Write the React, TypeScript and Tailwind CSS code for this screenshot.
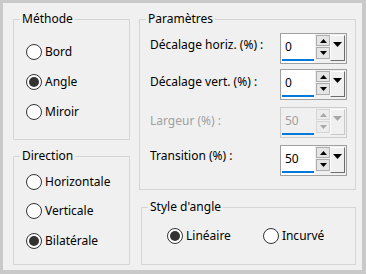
import React from "react";

function Radio({ label, checked }: { label: string; checked?: boolean }) {
  return (
    <div className="flex h-[16px] items-center gap-[3px]">
      <div className="flex h-[16px] w-[16px] items-center justify-center rounded-full border border-[#333333] bg-white">
        {checked && <div className="h-[10px] w-[10px] rounded-full bg-[#333333]" />}
      </div>
      <span className="leading-[16px] text-black">{label}</span>
    </div>
  );
}

function UpArrow({ color }: { color: string }) {
  return (
    <svg width="7" height="4" viewBox="0 0 7 4">
      <polygon points="0,4 7,4 3.5,0" fill={color} />
    </svg>
  );
}
function DownArrow({ color, w = 7, h = 4 }: { color: string; w?: number; h?: number }) {
  return (
    <svg width={w} height={h} viewBox={`0 0 ${w} ${h}`}>
      <polygon points={`0,0 ${w},0 ${w / 2},${h}`} fill={color} />
    </svg>
  );
}

function Spin({ value, disabled }: { value: string; disabled?: boolean }) {
  const arrow = disabled ? "#a8a8a8" : "#000000";
  return (
    <div
      className={`flex h-[31px] w-[67px] border bg-[#f0f0f0] ${
        disabled ? "border-[#cccccc]" : "border-[#a0a0a0]"
      }`}
    >
      <div className={`flex h-full w-[34px] flex-col pt-[5px] ${disabled ? "bg-[#f0f0f0]" : "bg-white"}`}>
        <span className={`h-[16px] pl-[4px] leading-[16px] ${disabled ? "text-[#a0a0a0]" : "text-black"}`}>
          {value}
        </span>
        <div className="ml-[1px] mt-[4px] h-[2px] w-[32px] bg-[#0078d7]" />
      </div>
      <div className="flex pl-[1px] pt-[1px]">
        <div className="flex w-[14px] flex-col">
          <div
            className={`flex h-[11px] w-[14px] items-center justify-center border ${
              disabled ? "border-[#d5d5d5] bg-[#ececec]" : "border-[#adadad] bg-[#e5e5e5]"
            }`}
          >
            <UpArrow color={arrow} />
          </div>
          <div
            className={`mt-[1px] flex h-[12px] w-[14px] items-center justify-center border ${
              disabled ? "border-[#d5d5d5] bg-[#ececec]" : "border-[#adadad] bg-[#e5e5e5]"
            }`}
          >
            <DownArrow color={arrow} />
          </div>
        </div>
        <div
          className={`flex h-[26px] w-[15px] justify-center border border-l-white border-t-white pt-[6px] ${
            disabled ? "border-b-[#c8c8c8] border-r-[#c8c8c8]" : "border-b-[#6d6d6d] border-r-[#6d6d6d]"
          }`}
        >
          <DownArrow color={arrow} w={9} h={5} />
        </div>
      </div>
    </div>
  );
}

function Row({
  label,
  value,
  disabled,
  pt,
  mt,
}: {
  label: string;
  value: string;
  disabled?: boolean;
  pt: string;
  mt: string;
}) {
  return (
    <div className={`flex items-start ${mt}`}>
      <div className={`w-[130px] leading-[16px] ${pt} ${disabled ? "text-[#a0a0a0]" : "text-black"}`}>
        {label}
      </div>
      <Spin value={value} disabled={disabled} />
    </div>
  );
}

export default function App() {
  return (
    <div className="h-[274px] w-[366px] bg-[#c9c9c9] pb-[4px] pl-[3px] pr-[4px] pt-[3px] font-['Noto_Sans',sans-serif] text-[12px]">
      <div className="flex h-full w-full bg-[#f0f0f0] pl-[10px] pt-[8px]">
        <div className="flex w-[117px] flex-col">
          <fieldset className="h-[129px] border border-[#d5d5d5]">
            <legend className="ml-[6px] px-[2px] leading-[16px] text-black">Méthode</legend>
            <div className="ml-[12px] mt-[17px] flex flex-col gap-[14px]">
              <Radio label="Bord" />
              <Radio label="Angle" checked />
              <Radio label="Miroir" />
            </div>
          </fieldset>
          <fieldset className="mt-[8px] h-[117px] border border-[#d5d5d5]">
            <legend className="ml-[6px] px-[2px] leading-[16px] text-black">Direction</legend>
            <div className="ml-[12px] mt-[10px] flex flex-col">
              <Radio label="Horizontale" />
              <div className="mt-[13px]">
                <Radio label="Verticale" />
              </div>
              <div className="mt-[14px]">
                <Radio label="Bilatérale" checked />
              </div>
            </div>
          </fieldset>
        </div>
        <div className="ml-[9px] flex flex-col">
          <fieldset className="h-[179px] w-[217px] border border-[#d5d5d5] pl-[10px]">
            <legend className="-ml-[4px] px-[2px] leading-[16px] text-black">Paramètres</legend>
            <Row label="Décalage horiz. (%) :" value="0" pt="pt-[4px]" mt="mt-[6px]" />
            <Row label="Décalage vert. (%) :" value="0" pt="pt-[5px]" mt="mt-[5px]" />
            <Row label="Largeur (%) :" value="50" disabled pt="pt-[6px]" mt="mt-[7px]" />
            <Row label="Transition (%) :" value="50" pt="pt-[3px]" mt="mt-[7px]" />
          </fieldset>
          <fieldset className="ml-[2px] mt-[9px] h-[66px] w-[215px] border border-[#d5d5d5]">
            <legend className="ml-[6px] px-[2px] leading-[16px] text-black">Style d'angle</legend>
            <div className="ml-[25px] mt-[13px] flex">
              <Radio label="Linéaire" checked />
              <div className="ml-[32px]">
                <Radio label="Incurvé" />
              </div>
            </div>
          </fieldset>
        </div>
      </div>
    </div>
  );
}
